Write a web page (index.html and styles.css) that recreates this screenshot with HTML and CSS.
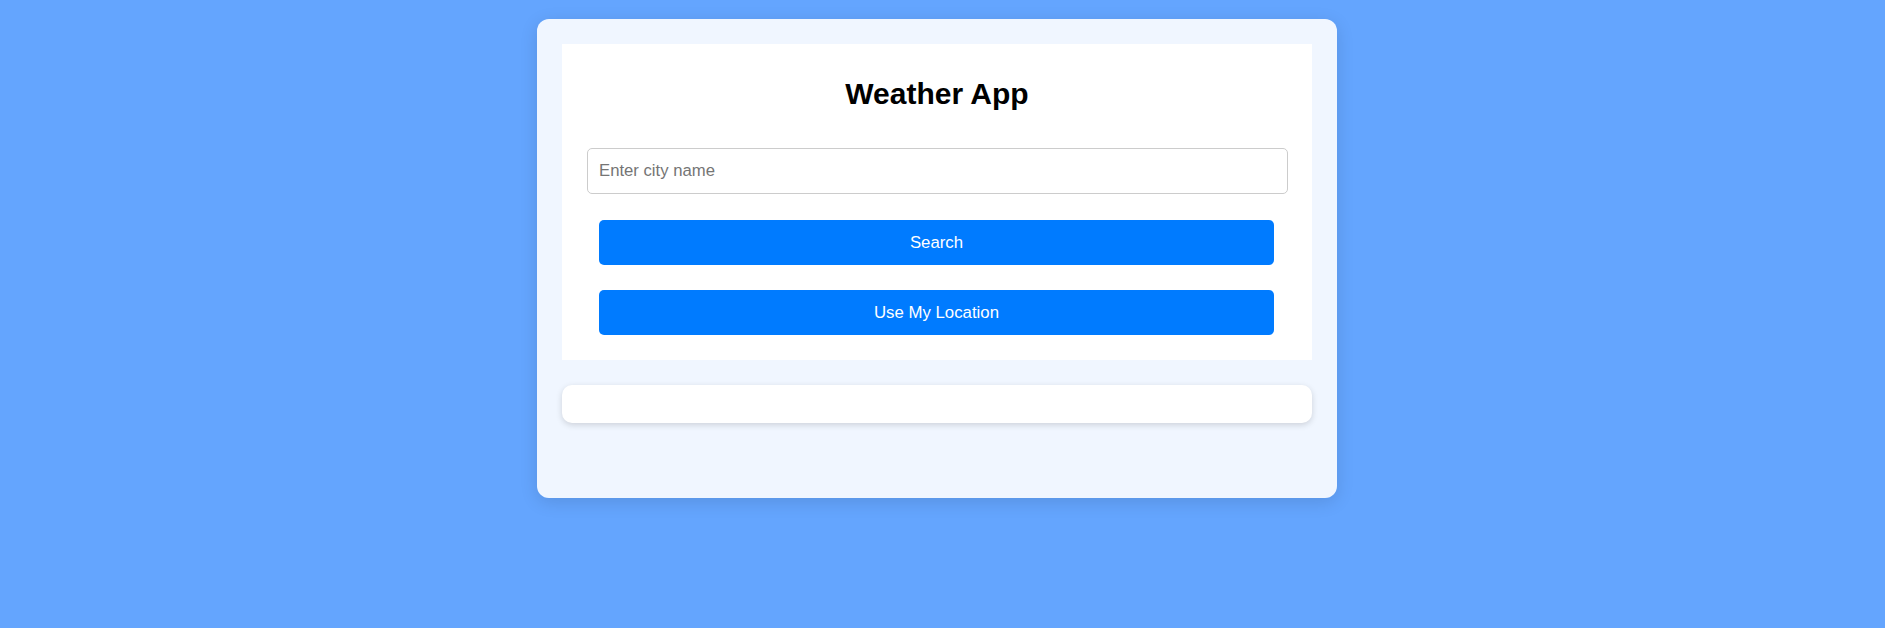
FILE: index.html
```html
<!DOCTYPE html>
<html lang="en">
<head>
<meta charset="utf-8">
<title>Weather App</title>
<link rel="stylesheet" href="styles.css">
</head>
<body>
  <div class="card">
    <div class="panel">
      <h1 class="title">Weather App</h1>
      <input class="city-input" type="text" placeholder="Enter city name">
      <button class="btn btn-search" type="button">Search</button>
      <button class="btn btn-location" type="button">Use My Location</button>
    </div>
    <div class="result"></div>
  </div>
</body>
</html>
```

FILE: styles.css
```css
html, body {
  height: 100%;
}

body {
  margin: 0;
  padding: 19px 11px 0 0;
  box-sizing: border-box;
  background: #64a5fe;
  font-family: "Liberation Sans", Arial, sans-serif;
  display: flex;
  justify-content: center;
  align-items: flex-start;
}

.card {
  width: 800px;
  box-sizing: border-box;
  padding: 25px 25px 75px;
  border-radius: 12px;
  background: rgba(255, 255, 255, 0.9);
  box-shadow: 0 4px 18px rgba(0, 0, 0, 0.12);
}

.panel {
  background: #ffffff;
  padding: 25px;
  display: flex;
  flex-direction: column;
  align-items: flex-start;
}

.title {
  align-self: stretch;
  margin: 8px 0 38px;
  font-size: 30px;
  line-height: 33px;
  font-weight: bold;
  color: #000;
  text-align: center;
}

.city-input {
  width: 701px;
  height: 46px;
  box-sizing: border-box;
  margin: 0;
  padding: 0 11px;
  border: 1px solid #cccccc;
  border-radius: 5px;
  font-family: "Liberation Sans", Arial, sans-serif;
  font-size: 16.7px;
  color: #000;
  outline: none;
}

.city-input::placeholder {
  color: #757575;
}

.btn {
  width: 675px;
  height: 45px;
  margin: 0 0 0 12px;
  border: none;
  border-radius: 5px;
  background: #007bff;
  color: #ffffff;
  font-family: "Liberation Sans", Arial, sans-serif;
  font-size: 16.8px;
  cursor: pointer;
}

.btn-search {
  margin-top: 26px;
}

.btn-location {
  margin-top: 25px;
}

.result {
  align-self: stretch;
  margin-top: 25px;
  height: 38px;
  border-radius: 10px;
  background: #ffffff;
  box-shadow: 0 2px 6px rgba(0, 0, 0, 0.15);
}

.card > .result {
  align-self: auto;
}
```
